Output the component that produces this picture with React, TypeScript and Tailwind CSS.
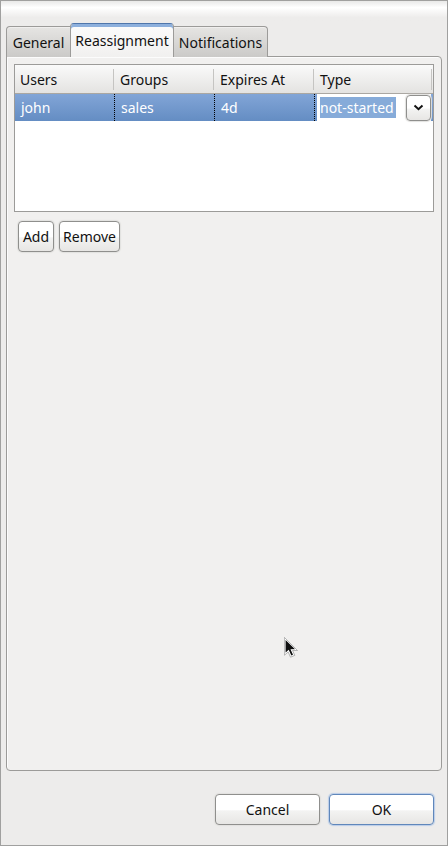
import React from 'react';

const columns = ['Users', 'Groups', 'Expires At', 'Type'];

const buttonBase =
  'rounded-[4px] border border-[#8f8f8d] bg-linear-to-b from-white from-50% via-[#f3f3f2] via-55% to-[#e7e6e4] text-center shadow-[0_0_1px_1px_#e2e1df]';

function Tab({ label, active = false, className }: { label: string; active?: boolean; className: string }) {
  return (
    <button
      type="button"
      role="tab"
      aria-selected={active}
      className={
        active
          ? `relative -mx-px flex h-[34px] items-center justify-center rounded-t-[4px] border border-b-0 border-[#9c9b99] border-t-[#4f76ab] bg-linear-to-b from-[#fcfcfc] to-[#f1f0ef] shadow-[inset_0_3px_0_#8db0dd] ${className}`
          : `flex h-[31px] items-center justify-center border border-b-0 border-[#9c9b99] bg-linear-to-b from-[#e6e5e3] to-[#cbcac8] pt-0.5 shadow-[inset_0_1px_0_#f0efee] ${className}`
      }
    >
      {label}
    </button>
  );
}

function PointerCursor() {
  return (
    <svg
      className="pointer-events-none absolute left-[283px] top-[636px]"
      width="14"
      height="21"
      viewBox="0 0 14 21"
      aria-hidden="true"
    >
      <path d="M1 1.5V17L4.5 13.8L7 19.2L9.8 18L7.4 12.8H12.5Z" fill="#111" stroke="#fff" strokeWidth="1.2" />
      <path d="M0.4 0.4V18.2L4.2 15L6.5 20.2L10.8 18.4L8.6 13.5H13.5Z" fill="none" stroke="#888" strokeWidth="0.6" />
    </svg>
  );
}

export default function App() {
  return (
    <div className="relative flex min-h-screen flex-col border border-[#a0a09f] bg-[#edeceb] px-[5px] pb-5 font-['Noto_Sans',sans-serif] text-[14px] leading-5 text-[#111]">
      <div className="-mx-[5px] h-[22px] bg-linear-to-b from-[#e9e9e8] via-white via-30% to-[#edeceb] to-75%" />

      <div role="tablist" className="relative z-10 -mb-px flex items-end">
        <Tab label="General" className="w-[65px] rounded-tl-[4px]" />
        <Tab label="Reassignment" active className="w-[104px]" />
        <Tab label="Notifications" className="w-[95px] rounded-tr-[4px]" />
      </div>

      <main
        role="tabpanel"
        className="flex-1 rounded-[4px] rounded-tl-none border border-[#9c9b99] bg-[#f1f0ef] px-[7px] pt-[7px] shadow-[inset_1px_1px_0_#fcfcfc]"
      >
        <div className="h-[148px] border border-[#9c9b99] bg-white">
          <table className="w-full table-fixed border-separate border-spacing-0 text-left">
            <colgroup>
              <col className="w-[100px]" />
              <col className="w-[100px]" />
              <col className="w-[100px]" />
              <col />
            </colgroup>
            <thead>
              <tr className="h-[29px] bg-linear-to-b from-[#fafafa] to-[#e3e2e0] shadow-[inset_0_-1px_0_#aaa7a2]">
                {columns.map((name) => (
                  <th key={name} scope="col" className="p-0 font-normal">
                    <div className="mr-px h-[21px] border-r border-[#c5c4c2] pl-[5px] leading-[22px]">{name}</div>
                  </th>
                ))}
              </tr>
            </thead>
            <tbody>
              <tr className="h-[27px] bg-linear-to-b from-[#82a5d7] to-[#648dc3] text-white">
                <td className="border-r border-dotted border-black p-0 pl-[6px]">john</td>
                <td className="border-r border-dotted border-black p-0 pl-[6px]">sales</td>
                <td className="border-r border-dotted border-black p-0 pl-[6px]">4d</td>
                <td className="p-0 pr-[2px]">
                  <div className="ml-[2px] flex h-[27px] items-center justify-between bg-white">
                    <input
                      type="text"
                      aria-label="Type"
                      defaultValue="not-started"
                      className="ml-[3px] h-[21px] w-[76px] bg-[#86abd9] p-0 text-white outline-none"
                    />
                    <button
                      type="button"
                      aria-label="Show types"
                      className={`flex h-[26px] w-[25px] items-center justify-center ${buttonBase}`}
                    >
                      <svg width="12" height="8" viewBox="0 0 12 8" fill="none" aria-hidden="true">
                        <path d="M1.5 1.5L5.5 5.2L9.5 1.5" stroke="#111" strokeWidth="2" />
                      </svg>
                    </button>
                  </div>
                </td>
              </tr>
            </tbody>
          </table>
        </div>

        <div className="mt-[9px] flex gap-[5px] pl-1">
          <button type="button" className={`h-[31px] w-9 ${buttonBase}`}>
            Add
          </button>
          <button type="button" className={`h-[31px] w-[61px] ${buttonBase}`}>
            Remove
          </button>
        </div>
      </main>

      <footer className="mt-[23px] flex justify-end gap-[9px] pr-2">
        <button type="button" className={`h-[31px] w-[105px] ${buttonBase}`}>
          Cancel
        </button>
        <button
          type="button"
          className="h-[31px] w-[105px] rounded-[4px] border border-[#6087bb] bg-linear-to-b from-white from-50% via-[#f3f3f2] via-55% to-[#e7e6e4] text-center shadow-[0_0_1px_1px_#b9cde8]"
        >
          OK
        </button>
      </footer>

      <PointerCursor />
    </div>
  );
}
